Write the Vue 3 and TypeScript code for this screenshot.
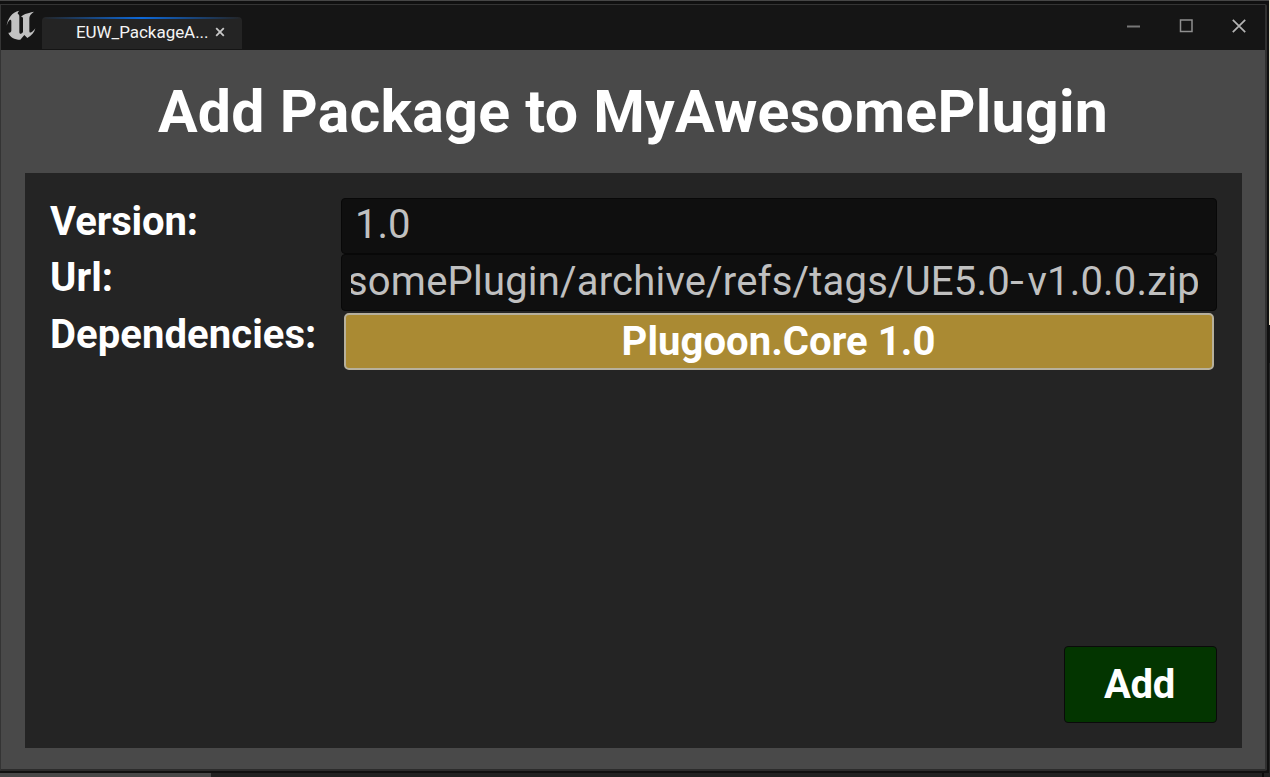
<script setup lang="ts">
import { computed, ref } from 'vue'

const tabLabel = 'EUW_PackageA...'
const title = 'Add Package to MyAwesomePlugin'
const version = ref('1.0')
const url = ref('somePlugin/archive/refs/tags/UE5.0-v1.0.0.zip')
const dependencies = ref<string[]>(['Plugoon.Core 1.0'])

// The hyphen is set wider than the font's own, so the URL is split around it.
const urlParts = computed(() => url.value.split('-'))
</script>

<template>
  <div class="desktop">
    <div class="backdrop-edge"></div>
    <div class="backdrop-foot"></div>
    <main class="window">
      <header class="titlebar">
        <svg class="logo" width="30" height="30" viewBox="18 31 90 90">
          <path
            fill="#c2c2c2"
            d="M20 78C23 58 35 37 58 33C52 39 52 42 55 44C58 46 58 49 58 53V96C58 101 60 103 63 102C66 101 68 99 69 97V57C69 52 66 51 62 53C68 44 80 41 102 36C92 43 88 49 88 56V93C88 98 90 100 94 98C99 95 102 91 106 86C103 99 95 108 82 115L73 106L61 120C43 120 30 113 25 99C31 100 34 98 34 92V66C34 60 31 59 28 62C25 65 23 70 20 78Z"
          />
        </svg>
        <div class="tab">
          <span class="tab-label">{{ tabLabel }}</span>
          <svg class="tab-close" width="10" height="10" viewBox="0 0 10 10">
            <path d="M1.2 1.2L8.8 8.8M8.8 1.2L1.2 8.8" stroke="#c8c8c8" stroke-width="1.8" />
          </svg>
        </div>
        <div class="controls">
          <svg width="14" height="14" viewBox="0 0 14 14">
            <path d="M1 7.5H14" stroke="#777" stroke-width="2" />
          </svg>
          <svg width="14" height="14" viewBox="0 0 14 14">
            <rect x="1.5" y="1" width="11.5" height="11.5" fill="none" stroke="#8f8f8f" stroke-width="1.5" />
          </svg>
          <svg width="14" height="14" viewBox="0 0 14 14">
            <path d="M0.8 0.8L13.2 13.2M13.2 0.8L0.8 13.2" stroke="#b4b4b4" stroke-width="1.7" />
          </svg>
        </div>
      </header>
      <section class="content">
        <h1>{{ title }}</h1>
        <div class="panel">
          <div class="row">
            <span class="label version-label">Version:</span>
            <div class="field"><span class="value version">{{ version }}</span></div>
          </div>
          <div class="row">
            <span class="label">Url:</span>
            <div class="field field-url">
              <span class="value url"><template v-for="(part, i) in urlParts" :key="i"><span v-if="i > 0" class="hyphen">-</span>{{ part }}</template></span>
            </div>
          </div>
          <div class="row">
            <span class="label">Dependencies:</span>
            <div class="deps">
              <button v-for="dep in dependencies" :key="dep" class="dep">{{ dep }}</button>
            </div>
          </div>
          <button class="add">Add</button>
        </div>
      </section>
    </main>
  </div>
</template>

<style>
body {
  margin: 0;
  overflow: hidden;
}
</style>

<style scoped>
* {
  box-sizing: border-box;
}
.desktop {
  position: relative;
  width: 1270px;
  height: 777px;
  padding-top: 4px;
  overflow: hidden;
  background: linear-gradient(#464646 0 1px, #101010 1px);
  font-family: Roboto, 'Liberation Sans', sans-serif;
  color: #fff;
}
.backdrop-edge {
  position: absolute;
  right: 0;
  top: 0;
  width: 1px;
  height: 777px;
  background: linear-gradient(#e8dcc3 0 325px, #151515 325px 363px, #252525 363px);
}
.backdrop-foot {
  position: absolute;
  left: 0;
  bottom: 0;
  width: 1270px;
  height: 4px;
  background: linear-gradient(90deg, #484848 0 211px, #222 211px 1262px, #0c0c0c 1262px 1264px, #222 1264px);
}
.window {
  width: 1267px;
  height: 767px;
  border: 1px solid #343434;
  border-right: 2px solid #303030;
  border-bottom: 2px solid #2c2c2c;
  border-radius: 0 2px 2px 0;
  background: #494949;
}
.titlebar {
  display: flex;
  height: 45px;
  background: #151515;
}
.logo {
  margin: 5px 0 0 5px;
}
.tab {
  display: flex;
  width: 200px;
  height: 32px;
  margin: 12px 0 0 6px;
  padding-left: 34px;
  border-radius: 4px 4px 0 0;
  background:
    linear-gradient(90deg, #242424, #0d68d8 50%, #242424) top / 100% 2px no-repeat,
    #242424;
}
.tab-label {
  width: 136px;
  font-size: 17px;
  line-height: 20px;
  margin-top: 5px;
  letter-spacing: -0.05px;
  white-space: nowrap;
  color: #f4f4f4;
}
.tab-close {
  margin-top: 10px;
  margin-left: 3px;
}
.controls {
  display: flex;
  gap: 39px;
  margin: 14px 19px 0 auto;
}
.content {
  display: flex;
  flex-direction: column;
  height: 719px;
  padding: 0 23px 21px 24px;
}
h1 {
  height: 123px;
  margin: 0;
  padding: 27px 1px 0 0;
  text-align: center;
  font-size: 59px;
  line-height: 70px;
  letter-spacing: 0.27px;
  white-space: nowrap;
}
.panel {
  display: flex;
  flex-direction: column;
  width: 1217px;
  height: 575px;
  padding: 25px;
  background: #242424;
}
.row {
  display: flex;
  height: 57px;
}
.row:first-child {
  height: 56px;
}
.label {
  width: 291px;
  padding-top: 1px;
  font-size: 40px;
  font-weight: 700;
  line-height: 46px;
  letter-spacing: 0.07px;
  white-space: nowrap;
}
.version-label {
  letter-spacing: -0.12px;
}
.field {
  width: 876px;
  height: 56px;
  padding: 0 18px 0 9px;
  border: 1px solid #080808;
  border-radius: 4px;
  background: #0f0f0f;
}
.field-url {
  height: 57px;
}
.value {
  display: block;
  overflow: hidden;
  height: 54px;
  font-size: 40px;
  line-height: 52px;
  white-space: nowrap;
  color: #c0c0c0;
}
.version {
  padding-left: 4px;
}
.url {
  line-height: 54px;
  letter-spacing: 0.2px;
  text-indent: -4px;
}
.hyphen {
  display: inline-block;
  width: 17.5px;
  text-indent: 0;
  transform: scaleX(1.25);
  transform-origin: left;
}
.deps {
  width: 876px;
  padding: 2px 3px;
}
button {
  font-family: inherit;
  font-size: 40px;
  font-weight: 700;
  line-height: 46px;
  color: #fff;
  padding: 0;
}
.dep {
  display: block;
  width: 870px;
  height: 57px;
  padding-right: 1px;
  border: 2px solid #b7b09c;
  border-radius: 5px;
  letter-spacing: 0.06px;
  background: #aa8a33;
}
.add {
  width: 153px;
  height: 77px;
  margin: auto 0 0 auto;
  padding-right: 2px;
  border: 1px solid #0a0a0a;
  border-radius: 4px;
  letter-spacing: -0.3px;
  background: #033500;
}
</style>
